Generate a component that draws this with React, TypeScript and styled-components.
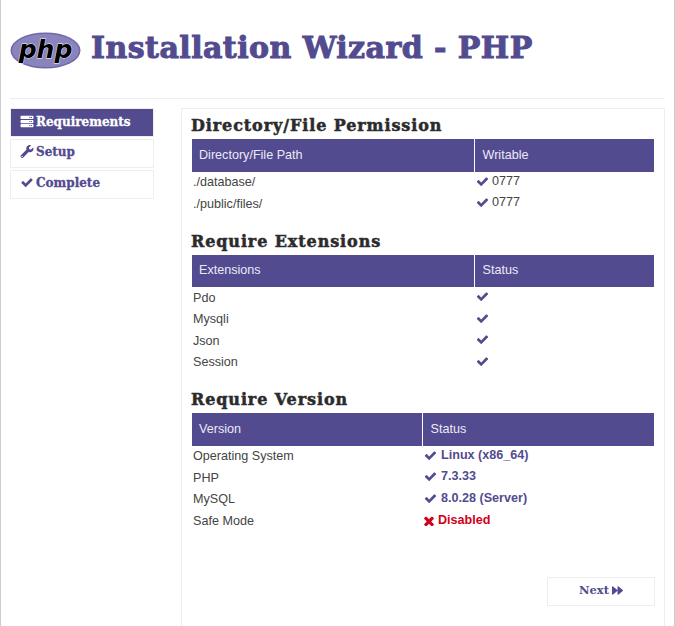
import React from "react";
import styled, { createGlobalStyle } from "styled-components";
import { FaForward, FaServer, FaWrench } from "react-icons/fa";

const purple = "#534b8f";

const GlobalStyle = createGlobalStyle`
  html, body {
    margin: 0;
    height: 100%;
    overflow: hidden;
    background: #fff;
  }
  body {
    font-family: "Liberation Sans", Arial, sans-serif;
    font-size: 12.6px;
    color: #444;
  }
`;

const Wrapper = styled.div`
  box-sizing: border-box;
  width: 675px;
  height: 626px;
  padding: 0 9px;
  border-left: 1px solid #ccc;
  border-right: 1px solid #ccc;
  overflow: hidden;
`;

const Header = styled.header`
  box-sizing: border-box;
  height: 99px;
  display: flex;
  align-items: center;
  gap: 10px;
  padding-bottom: 3px;
  border-bottom: 1px solid #eee;
`;

const LogoSvg = styled.svg`
  flex: none;
  margin-top: 5px;
`;

const Title = styled.h1`
  margin: 0;
  font-family: "DejaVu Serif", serif;
  font-weight: 700;
  font-size: 30px;
  letter-spacing: 0.45px;
  color: ${purple};
  -webkit-text-stroke: 1px ${purple};
  white-space: nowrap;
`;

const Body = styled.div`
  display: flex;
  align-items: flex-start;
  gap: 27px;
  padding-top: 9px;
`;

const Side = styled.nav`
  width: 144px;
  flex: none;
  display: flex;
  flex-direction: column;
  gap: 2px;
`;

const StepItem = styled.div<{ $active?: boolean }>`
  box-sizing: border-box;
  height: 29px;
  display: flex;
  align-items: center;
  gap: 2px;
  padding: 0 0 ${(p) => (p.$active ? "2px" : "4px")} 9px;
  border: 1px solid #eee;
  background: ${(p) => (p.$active ? purple : "#fff")};
  background-clip: padding-box;
  color: ${(p) => (p.$active ? "#fff" : purple)};
  font-family: "DejaVu Serif", serif;
  font-weight: 700;
  font-size: 12px;
  -webkit-text-stroke: 0.3px currentColor;
  svg {
    width: 14px;
    height: 13px;
  }
`;

const Panel = styled.main`
  box-sizing: border-box;
  width: 484px;
  height: 560px;
  flex: none;
  padding: 0 10px 0 9px;
  border: 1px solid #eee;
`;

const SectionTitle = styled.h2`
  margin: 0;
  height: 30px;
  line-height: 34px;
  font-family: "DejaVu Serif", serif;
  font-weight: 700;
  font-size: 16px;
  letter-spacing: 0.9px;
  color: #2b2b2b;
  -webkit-text-stroke: 0.5px #2b2b2b;
  white-space: nowrap;
`;

const Section = styled.section`
  margin-bottom: 10px;
`;

const Table = styled.table`
  width: 462px;
  margin-left: 1px;
  border-collapse: collapse;
  table-layout: fixed;
`;

const HeadCell = styled.th<{ $width?: number }>`
  box-sizing: border-box;
  height: 32.5px;
  width: ${(p) => (p.$width ? `${p.$width}px` : "auto")};
  padding: 0 7px 1px;
  background: ${purple};
  color: #ece9f7;
  font-weight: 400;
  font-size: 12.6px;
  text-align: left;
  & + & {
    border-left: 1px solid #fff;
    padding-left: 8px;
  }
`;

const Cell = styled.td`
  height: 21.5px;
  padding: 0 1px;
  font-size: 12.6px;
  color: #444;
`;

const StatusCell = styled(Cell)`
  padding-left: 2px;
`;

const Value = styled.span<{ $bad?: boolean; $bold?: boolean }>`
  display: inline-flex;
  align-items: center;
  gap: ${(p) => (p.$bold ? "4px" : "3px")};
  color: ${(p) => (p.$bad ? "#d0021b" : p.$bold ? purple : "#444")};
  font-weight: ${(p) => (p.$bold ? 700 : 400)};
  svg {
    width: ${(p) => (p.$bad ? "10px" : "13px")};
    height: ${(p) => (p.$bad ? "10px" : "13px")};
    margin-top: 1px;
    color: ${(p) => (p.$bad ? "#d0021b" : purple)};
  }
`;

const Footer = styled.div`
  display: flex;
  justify-content: flex-end;
  margin: 45px -1px 0 0;
`;

const NextButton = styled.button`
  box-sizing: border-box;
  width: 108px;
  height: 29px;
  display: flex;
  align-items: center;
  justify-content: center;
  gap: 3px;
  padding: 0 0 2px;
  border: 1px solid #eee;
  background: #fff;
  color: ${purple};
  font-family: "DejaVu Serif", serif;
  font-weight: 700;
  font-size: 11.5px;
  svg {
    width: 11px;
    height: 11px;
  }
`;

const CheckIcon: React.FC = () => (
  <svg viewBox="0 0 1792 1792" fill="currentColor">
    <path d="M1671 566q0 40-28 68l-724 724-136 136q-28 28-68 28t-68-28l-136-136-362-362q-28-28-28-68t28-68l136-136q28-28 68-28t68 28l294 294 656-657q28-28 68-28t68 28l136 136q28 28 28 68z" />
  </svg>
);

const CrossIcon: React.FC = () => (
  <svg viewBox="290 290 1212 1212" fill="currentColor">
    <path d="M1490 1322q0 40-28 68l-136 136q-28 28-68 28t-68-28l-294-294-294 294q-28 28-68 28t-68-28l-136-136q-28-28-28-68t28-68l294-294-294-294q-28-28-28-68t28-68l136-136q28-28 68-28t68 28l294 294 294-294q28-28 68-28t68 28l136 136q28 28 28 68t-28 68l-294 294 294 294q28 28 28 68z" />
  </svg>
);

const PhpLogo: React.FC = () => (
  <LogoSvg width="71" height="37" viewBox="0 0 71 37">
    <ellipse cx="35.5" cy="18.5" rx="35" ry="18" fill="#6f68a8" />
    <ellipse cx="35.5" cy="18.5" rx="33.5" ry="16.5" fill="#8a84bd" />
    <text
      x="35.5"
      y="26"
      textAnchor="middle"
      fontFamily="'DejaVu Sans', sans-serif"
      fontStyle="italic"
      fontWeight="700"
      fontSize="25"
      fill="#000"
      stroke="#fff"
      strokeWidth="0.8"
      paintOrder="stroke"
    >
      php
    </text>
  </LogoSvg>
);

type Row = { name: string; value?: string; bold?: boolean; bad?: boolean };

const Group: React.FC<{
  title: string;
  heads: [string, string];
  firstWidth: number;
  rows: Row[];
}> = ({ title, heads, firstWidth, rows }) => (
  <Section>
    <SectionTitle>{title}</SectionTitle>
    <Table>
      <thead>
        <tr>
          <HeadCell $width={firstWidth}>{heads[0]}</HeadCell>
          <HeadCell>{heads[1]}</HeadCell>
        </tr>
      </thead>
      <tbody>
        {rows.map((row) => (
          <tr key={row.name}>
            <Cell>{row.name}</Cell>
            <StatusCell>
              <Value $bad={row.bad} $bold={row.bold}>
                {row.bad ? <CrossIcon /> : <CheckIcon />}
                {row.value}
              </Value>
            </StatusCell>
          </tr>
        ))}
      </tbody>
    </Table>
  </Section>
);

const App: React.FC = () => (
  <Wrapper>
    <GlobalStyle />
    <Header>
      <PhpLogo />
      <Title>Installation Wizard - PHP</Title>
    </Header>
    <Body>
      <Side>
        <StepItem $active>
          <FaServer />
          Requirements
        </StepItem>
        <StepItem>
          <FaWrench />
          Setup
        </StepItem>
        <StepItem>
          <CheckIcon />
          Complete
        </StepItem>
      </Side>
      <Panel>
        <Group
          title="Directory/File Permission"
          heads={["Directory/File Path", "Writable"]}
          firstWidth={282}
          rows={[
            { name: "./database/", value: "0777" },
            { name: "./public/files/", value: "0777" },
          ]}
        />
        <Group
          title="Require Extensions"
          heads={["Extensions", "Status"]}
          firstWidth={282}
          rows={[{ name: "Pdo" }, { name: "Mysqli" }, { name: "Json" }, { name: "Session" }]}
        />
        <Group
          title="Require Version"
          heads={["Version", "Status"]}
          firstWidth={230}
          rows={[
            { name: "Operating System", value: "Linux (x86_64)", bold: true },
            { name: "PHP", value: "7.3.33", bold: true },
            { name: "MySQL", value: "8.0.28 (Server)", bold: true },
            { name: "Safe Mode", value: "Disabled", bold: true, bad: true },
          ]}
        />
        <Footer>
          <NextButton>
            Next
            <FaForward />
          </NextButton>
        </Footer>
      </Panel>
    </Body>
  </Wrapper>
);

export default App;
